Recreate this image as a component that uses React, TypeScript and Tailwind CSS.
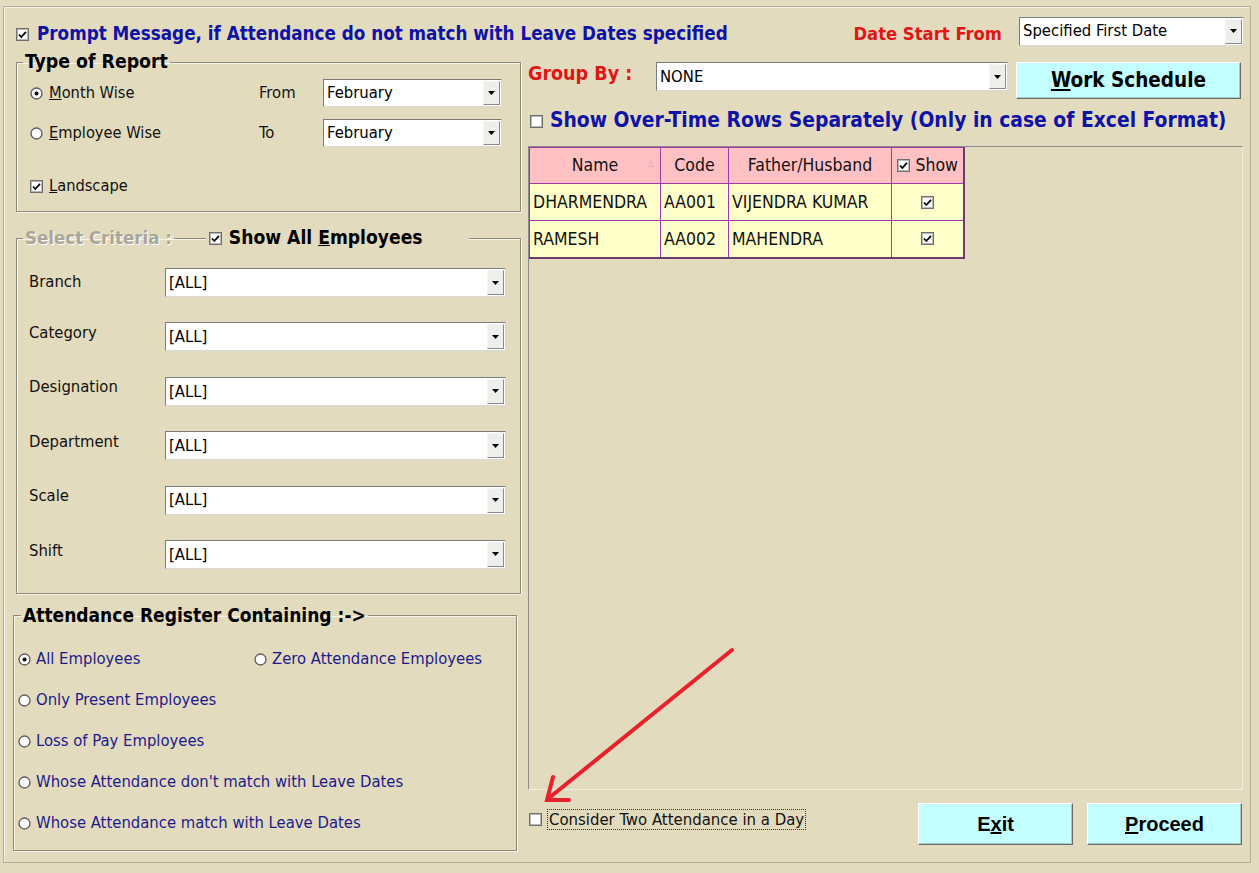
import React from "react";

const Check = ({ checked = true }: { checked?: boolean }) => (
  <svg width="13" height="13" viewBox="0 0 13 13" className="shrink-0">
    <rect x="0.5" y="0.5" width="12" height="12" fill="#ffffff" stroke="#6e6e6e" />
    <rect x="1.5" y="1.5" width="10" height="10" fill="none" stroke="#b8b8b8" />
    {checked && <path d="M3 6.5 L5.3 9 L10 3.8" fill="none" stroke="#000" strokeWidth="1.8" />}
  </svg>
);

const Radio = ({ checked = false }: { checked?: boolean }) => (
  <svg width="13" height="13" viewBox="0 0 13 13" className="shrink-0">
    <circle cx="6.5" cy="6.5" r="5.5" fill="#ffffff" stroke="#5a5a5a" strokeWidth="1.3" />
    {checked && <circle cx="6.5" cy="6.5" r="2" fill="#000" />}
  </svg>
);

const Combo = ({ value, className }: { value: string; className: string }) => (
  <div className={`flex items-stretch bg-white border border-t-[#7c7c7c] border-l-[#7c7c7c] border-r-[#d8d8d8] border-b-[#d8d8d8] ${className}`}>
    <div className="flex-1 flex items-center pl-[3px] pt-[1px] text-[16.5px] text-black leading-none overflow-hidden whitespace-nowrap">{value}</div>
    <div className="w-[17px] my-[1px] mr-[1px] flex items-center justify-center bg-[#eeeeea] border border-t-[#f4f4f4] border-l-[#f4f4f4] border-r-[#8a8a8a] border-b-[#8a8a8a]">
      <svg width="7" height="4" viewBox="0 0 7 4">
        <path d="M0 0 H7 L3.5 4 Z" fill="#000" />
      </svg>
    </div>
  </div>
);

const groupBorder =
  "border border-[#8f8b7a] shadow-[inset_1px_1px_0_#f7f4ea,1px_1px_0_#f7f4ea]";

export default function App() {
  const F = "font-['DejaVu_Sans_Condensed','DejaVu_Sans',sans-serif]";
  return (
    <div className={`relative w-[1259px] h-[873px] bg-[#e3dbbd] overflow-hidden ${F}`}>
      <div className="ml-[3px] mt-[6px] w-[1248px] h-[857px] border border-[#b3ae98] shadow-[inset_1px_1px_0_#f5f1e3] pl-[9px] pt-[10px]">
        {/* top row */}
        <div className="flex items-center h-[28px]">
          <div className="flex items-center ml-[3px] mt-[6px]">
            <Check />
            <span className="ml-[8px] text-[18.7px] font-bold text-[#0f12a6]">
              Prompt Message, if Attendance do not match with Leave Dates specified
            </span>
          </div>
          <div className="ml-auto flex items-center">
            <span className="text-[18.3px] font-bold text-[#e01515] mt-[6px]">Date Start From</span>
            <Combo value="Specified First Date" className="ml-[17px] w-[225px] h-[29px]" />
            <div className="w-[6px]" />
          </div>
        </div>

        {/* body */}
        <div className="flex mt-[6px]">
          {/* left column */}
          <div className="w-[508px] flex flex-col">
            <fieldset className={`ml-[3px] w-[505px] h-[161px] ${groupBorder} pl-[13px] pr-[18px]`}>
              <legend className="ml-[-7px] px-[2px] text-[19.3px] font-bold text-black leading-[22px]">Type of Report</legend>
              <div className="mt-[6px] flex flex-col">
                <div className="flex items-center h-[28px]">
                  <Radio checked />
                  <span className="ml-[6px] text-[16.3px] text-[#111] w-[210px]"><u>M</u>onth Wise</span>
                  <span className="text-[16.5px] text-[#111] w-[64px]">From</span>
                  <Combo value="February" className="w-[179px] h-[28px]" />
                </div>
                <div className="flex items-center h-[28px] mt-[12px]">
                  <Radio />
                  <span className="ml-[6px] text-[16.3px] text-[#111] w-[210px]"><u>E</u>mployee Wise</span>
                  <span className="text-[16.5px] text-[#111] w-[64px]">To</span>
                  <Combo value="February" className="w-[179px] h-[28px]" />
                </div>
                <div className="flex items-center h-[28px] mt-[25px]">
                  <Check />
                  <span className="ml-[6px] text-[16.3px] text-[#111]"><u>L</u>andscape</span>
                </div>
              </div>
            </fieldset>

            <fieldset className={`ml-[3px] mt-[15px] w-[505px] h-[367px] ${groupBorder} pl-[12px]`}>
              <legend className="ml-[-6px] flex items-center leading-[22px]">
                <span className="text-[18.5px] font-bold text-[#a9a69a] [text-shadow:1px_1px_0_#ffffff] px-[2px]">Select Criteria :</span>
                <span className="w-[32px] h-px bg-[#8f8b7a]" />
                <span className="flex items-center bg-[#e3dbbd] pl-[3px] pr-[46px]">
                  <Check />
                  <span className="ml-[7px] text-[19.1px] font-bold text-black">Show All <u>E</u>mployees</span>
                </span>
              </legend>
              <div className="mt-[19px] flex flex-col gap-[25.4px]">
                {["Branch", "Category", "Designation", "Department", "Scale", "Shift"].map((l, i) => (
                  <div key={l} className="flex items-center h-[29px]">
                    <span className={`w-[136px] text-[16.5px] text-[#111] ${i === 0 ? "" : "mb-[7px]"}`}>{l}</span>
                    <Combo value="[ALL]" className="w-[341px] h-[29px]" />
                  </div>
                ))}
              </div>
            </fieldset>

            <fieldset className={`mt-[10px] w-[504px] h-[247px] ${groupBorder} pl-[4px]`}>
              <legend className="ml-[3px] px-[2px] text-[19px] font-bold text-black leading-[22px]">Attendance Register Containing :-&gt;</legend>
              <div className="mt-[22px] flex flex-col gap-[19px] text-[16.5px] text-[#1b1a8e]">
                <div className="flex items-center h-[22px]">
                  <div className="flex items-center w-[236px]">
                    <Radio checked />
                    <span className="ml-[5px]">All Employees</span>
                  </div>
                  <Radio />
                  <span className="ml-[5px]">Zero Attendance Employees</span>
                </div>
                {["Only Present Employees", "Loss of Pay Employees", "Whose Attendance don't match with Leave Dates", "Whose Attendance match with Leave Dates"].map((t) => (
                  <div key={t} className="flex items-center h-[22px]">
                    <Radio />
                    <span className="ml-[5px]">{t}</span>
                  </div>
                ))}
              </div>
            </fieldset>
          </div>

          {/* right column */}
          <div className="ml-[7px] w-[715px] flex flex-col pt-[11px]">
            <div className="flex items-center h-[37px]">
              <span className="w-[128px] text-[19.5px] font-bold text-[#e01515] mb-[13px]">Group By :</span>
              <Combo value="NONE" className="w-[352px] h-[29px] mb-[8px]" />
              <button className="ml-[8px] w-[225px] h-[37px] bg-[#c3ffff] border border-t-[#ffffff] border-l-[#ffffff] border-r-[#6b6b6b] border-b-[#6b6b6b] shadow-[inset_-1px_-1px_0_#a8c8c8] text-[20.5px] font-bold text-black">
                <u>W</u>ork Schedule
              </button>
            </div>
            <div className="flex items-center h-[22px] mt-[11px] ml-[2px]">
              <Check checked={false} />
              <span className="ml-[7px] text-[20.85px] font-bold text-[#0f12a6]">
                Show Over-Time Rows Separately (Only in case of Excel Format)
              </span>
            </div>
            <div className="mt-[14px] w-[715px] h-[644px] border border-t-[#8b8b8b] border-l-[#8b8b8b] border-r-[#f2eee0] border-b-[#f2eee0]">
              <table className="border-collapse text-[17.5px] text-[#111] border-r-2 border-b-2 border-r-[#6d3a6d] border-b-[#6d3a6d] table-fixed">
                <thead>
                  <tr className="h-[36px] bg-[#ffc1c3]">
                    <th className="w-[131px] font-normal border border-[#a238a8] relative">
                      Name
                      <span className="absolute right-[6px] top-[9px] text-[9px] text-[#c8a8a8]">△</span>
                    </th>
                    <th className="w-[68px] font-normal border border-[#a238a8]">Code</th>
                    <th className="w-[163px] font-normal border border-[#a238a8]">Father/Husband</th>
                    <th className="w-[72px] font-normal border border-[#a238a8]">
                      <span className="flex items-center justify-center gap-[6px]">
                        <Check />
                        Show
                      </span>
                    </th>
                  </tr>
                </thead>
                <tbody>
                  {[
                    ["DHARMENDRA", "AA001", "VIJENDRA KUMAR"],
                    ["RAMESH", "AA002", "MAHENDRA"],
                  ].map((r) => (
                    <tr key={r[0]} className="h-[37px] bg-[#ffffc9]">
                      <td className="border border-[#a238a8] pl-[3px] whitespace-nowrap">{r[0]}</td>
                      <td className="border border-[#a238a8] pl-[3px] whitespace-nowrap">{r[1]}</td>
                      <td className="border border-[#a238a8] pl-[3px] whitespace-nowrap">{r[2]}</td>
                      <td className="border border-[#a238a8]">
                        <span className="flex justify-center"><Check /></span>
                      </td>
                    </tr>
                  ))}
                </tbody>
              </table>
            </div>
            <div className="flex mt-[13px] h-[42px]">
              <div className="flex items-center h-[22px] mt-[5px] ml-[1px]">
                <Check checked={false} />
                <span className="ml-[5px] px-[1px] border border-dotted border-[#333] text-[16.6px] leading-[19px] text-[#111] font-['Liberation_Sans_Narrow','DejaVu_Sans_Condensed',sans-serif]">
                  Consider Two Attendance in a Day
                </span>
              </div>
              <button className="ml-auto w-[155px] h-[42px] bg-[#c3ffff] border border-t-[#ffffff] border-l-[#ffffff] border-r-[#6b6b6b] border-b-[#6b6b6b] shadow-[inset_-1px_-1px_0_#a8c8c8] text-[20px] font-bold text-black font-['Liberation_Sans',sans-serif]">
                E<u>x</u>it
              </button>
              <button className="ml-[14px] mr-[1px] w-[155px] h-[42px] bg-[#c3ffff] border border-t-[#ffffff] border-l-[#ffffff] border-r-[#6b6b6b] border-b-[#6b6b6b] shadow-[inset_-1px_-1px_0_#a8c8c8] text-[20px] font-bold text-black font-['Liberation_Sans',sans-serif]">
                <u>P</u>roceed
              </button>
            </div>
          </div>
        </div>
      </div>

      {/* red annotation arrow */}
      <svg className="absolute left-0 top-0 pointer-events-none" width="1259" height="873">
        <g stroke="#e8212b" strokeWidth="4" strokeLinecap="round" fill="none">
          <path d="M732 650 L549 798" />
          <path d="M553 777 L547 800 L569 800" />
        </g>
      </svg>
    </div>
  );
}
